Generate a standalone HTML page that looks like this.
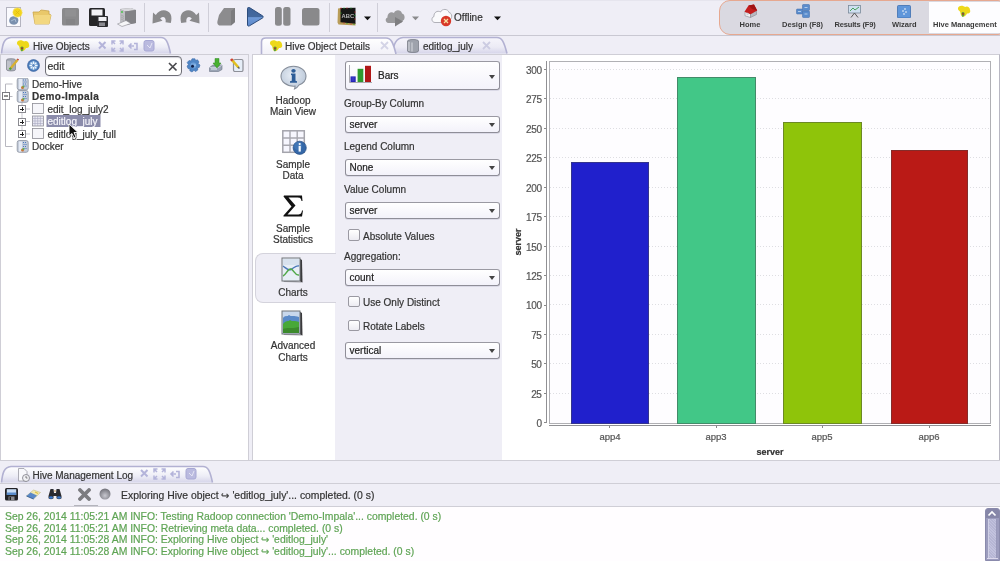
<!DOCTYPE html>
<html><head><meta charset="utf-8">
<style>
*{margin:0;padding:0;box-sizing:border-box}
html,body{width:1000px;height:561px;overflow:hidden;background:#EFEEF6;font-family:"Liberation Sans",sans-serif;color:#333;font-size:10px;position:relative}
.t,.combo,.lbl,.cbl,.tree,.log,.xl,.yt{-webkit-text-stroke:0.2px currentColor}
div,svg{position:absolute}
.t{white-space:nowrap;line-height:10px}
.sep{width:1px;background:#CFCED8;top:3px;height:29px}
.pl{font-weight:bold;font-size:7.5px;color:#3A3A3A;top:19.7px;line-height:10px;text-align:center;white-space:nowrap}
.combo{left:345px;width:155px;height:17.6px;margin-top:-0.2px;border:1px solid #8F8E98;border-top:1.5px solid #9A99A2;border-radius:3px;background:linear-gradient(#FFFFFF,#F3F2FA);font-size:10px;line-height:15px;padding-left:3.5px;color:#222;box-shadow:0 1px 0 #DAD9E6}
.combo:after{content:"";position:absolute;right:4px;top:50%;margin-top:-2px;border-left:3.5px solid transparent;border-right:3.5px solid transparent;border-top:4px solid #444}
.bars:after{margin-top:-0.5px}
.lbl{left:344px;color:#333;line-height:10px;white-space:nowrap}
.cb{left:348px;width:11.5px;height:11.5px;border:1.3px solid #9A99A2;border-radius:2px;background:linear-gradient(#FFF,#ECEBF2)}
.cbl{left:363px;color:#333;line-height:10px;white-space:nowrap}
.nav{width:80px;left:253px;text-align:center;line-height:11px;color:#333}
.yt{left:501px;width:40.6px;text-align:right;font-size:10px;line-height:10px;color:#555;margin-top:0.5px;letter-spacing:-0.35px}
.grid{left:550px;width:440px;height:1px;background:repeating-linear-gradient(90deg,#DEDEE2 0 1.5px,transparent 1.5px 3px)}
.xl{font-size:9.5px;color:#555;line-height:10px;width:40px;text-align:center}
.log{left:5px;font-size:10.4px;color:#5FA455;line-height:10px;white-space:nowrap}
.tree{color:#333;line-height:10px;white-space:nowrap}
#W{left:0;top:0;width:1000px;height:561px;will-change:transform}
</style></head><body><div id="W">

<!-- ================= TOOLBAR ================= -->
<div style="left:0;top:0;width:1000px;height:1px;background:#E6E5EE"></div>
<div style="left:0;top:35px;width:1000px;height:1px;background:#C9C8D2"></div>

<!-- 1 new -->
<svg style="left:6px;top:7px" width="17" height="20" viewBox="0 0 17 20">
 <rect x="0.5" y="0.5" width="14" height="19" fill="#FAFAFE" stroke="#B4B4C0"/>
 <path d="M3.5 12 C4.5 9 8 8.5 10 10 C12 10.5 13 12.5 12 15 C11.5 17 9 18 6.5 17.5 C4 17 2.5 14.5 3.5 12 Z" fill="#7A90AE"/>
 <path d="M5 14 L9 12 L10 15" stroke="#A8BCD4" stroke-width="1" fill="none"/>
 <circle cx="11.5" cy="5.5" r="4.6" fill="#F2D41C" stroke="#F6E060" stroke-width="1.2" stroke-dasharray="1 1"/>
 <path d="M9.5 3.5 L13.5 7.5 M13.5 3.5 L9.5 7.5" stroke="#E0B810" stroke-width="0.8"/>
</svg>
<!-- 2 folder -->
<svg style="left:32px;top:9px" width="20" height="16" viewBox="0 0 20 16">
 <path d="M1 3 L7 3 L9 1 L17 2 L17 5 L19 6 L17 15 L3 15 Z" fill="#E9C86A" stroke="#C9A44A" stroke-width="0.8"/>
 <path d="M2 6 L19 6 L17 15 L3 15 Z" fill="#F2D780"/>
</svg>
<!-- 3 gray floppy -->
<svg style="left:62px;top:8px" width="17" height="18" viewBox="0 0 17 18">
 <rect x="0" y="0" width="17" height="17.5" rx="1.5" fill="#8A8A8C"/>
 <rect x="3" y="1.5" width="11" height="7" fill="#909092"/>
 <rect x="4" y="11" width="9" height="6" fill="#848486"/>
</svg>
<!-- 4 black floppy -->
<svg style="left:89px;top:8px" width="19" height="19" viewBox="0 0 19 19">
 <rect x="0" y="0" width="16" height="18" rx="1.5" fill="#262628"/>
 <rect x="2.5" y="1.5" width="11" height="6" fill="#F2F2F6"/>
 <rect x="8" y="8" width="11" height="11" rx="1" fill="#2C2C30"/>
 <rect x="9.5" y="9" width="8" height="4" fill="#F0F0F4"/>
 <rect x="10" y="14.5" width="6" height="3.5" fill="#8A8A90"/>
</svg>
<!-- 5 printer -->
<svg style="left:117px;top:7px" width="20" height="20" viewBox="0 0 20 20">
 <path d="M3 2 L14 1 L19 3 L19 16 L8 18 L3 15 Z" fill="#8A8A8E"/>
 <path d="M3 2 L14 1 L19 3 L8 4.5 Z" fill="#D8D8DC"/>
 <path d="M3 2 L8 4.5 L8 18 L3 15 Z" fill="#BDBDC2"/>
 <path d="M8 4.5 L19 3 L19 16 L8 18 Z" fill="#828286"/>
 <circle cx="5" cy="5" r="0.9" fill="#40C040"/>
 <path d="M4 8 L7 9.5 M4 10 L7 11.5 M4 12 L7 13.5" stroke="#9A9AA0" stroke-width="0.6"/>
 <path d="M0.5 17 L9 13.5 L14 16.5 L5 19.5 Z" fill="#F6F6F8" stroke="#8A8A90" stroke-width="0.6"/>
</svg>
<div class="sep" style="left:144px"></div>
<!-- 6 undo -->
<svg style="left:152px;top:9px" width="20" height="15" viewBox="0 0 20 15">
 <path d="M0.5 14.5 L1 3.5 L3.8 6 C7 0.5 15 -0.5 18.5 5 C19.8 7.5 19.6 11 18.8 14 L13.5 13.2 C14.2 10.5 13 7.8 10.8 8 C9.8 8.1 8.8 8.8 8.2 9.5 L10.5 11.8 Z" fill="#8A8A8C"/>
</svg>
<!-- 7 redo -->
<svg style="left:180px;top:9px" width="20" height="15" viewBox="0 0 20 15">
 <g transform="translate(20,0) scale(-1,1)">
 <path d="M0.5 14.5 L1 3.5 L3.8 6 C7 0.5 15 -0.5 18.5 5 C19.8 7.5 19.6 11 18.8 14 L13.5 13.2 C14.2 10.5 13 7.8 10.8 8 C9.8 8.1 8.8 8.8 8.2 9.5 L10.5 11.8 Z" fill="#8A8A8C"/>
 </g>
</svg>
<div class="sep" style="left:208px"></div>
<!-- 8 gray box -->
<svg style="left:217px;top:7px" width="19" height="19" viewBox="0 0 19 19">
 <path d="M7 1 L18 1 L18 15 L14 18.5 L3 18.5 C0.5 18.5 0 16 0.5 14 L2 8 Z" fill="#8C8C8E"/>
 <path d="M14 4 L18 1 L18 15 L14 18.5 Z" fill="#7C7C7E"/>
</svg>
<!-- 9 play -->
<svg style="left:246px;top:7px" width="18" height="20" viewBox="0 0 18 20">
 <defs><linearGradient id="pg" x1="0" y1="0" x2="0" y2="1"><stop offset="0" stop-color="#3F649A"/><stop offset="0.5" stop-color="#44699E"/><stop offset="0.55" stop-color="#6F9AD8"/><stop offset="1" stop-color="#5A86C8"/></linearGradient></defs>
 <path d="M1.5 1.5 C1.5 0.5 2.5 0 3.5 0.6 L16.5 8.8 C17.5 9.4 17.5 10.4 16.5 11 L3.5 18.8 C2.5 19.4 1.5 19 1.5 18 Z" fill="url(#pg)" stroke="#2C4C7C" stroke-width="1"/>
</svg>
<!-- 10 pause -->
<svg style="left:275px;top:7px" width="16" height="19" viewBox="0 0 16 19">
 <rect x="0" y="0" width="6.8" height="18.8" rx="2.5" fill="#8A8A8C"/>
 <rect x="8.2" y="0" width="7.3" height="18.8" rx="2.5" fill="#8A8A8C"/>
</svg>
<!-- 11 stop -->
<svg style="left:302px;top:8px" width="18" height="18" viewBox="0 0 18 18">
 <rect x="0" y="0" width="17.5" height="17.6" rx="2.5" fill="#89898B"/>
</svg>
<div class="sep" style="left:329px"></div>
<!-- 12 abc board -->
<svg style="left:337px;top:7px" width="20" height="19" viewBox="0 0 20 19">
 <path d="M0.5 15.5 L1 1.5 L4 1 L4 14.5 L18.5 16 L18.5 18.5 L1.5 17.5 Z" fill="#B89C58"/>
 <path d="M3.5 1 L18.5 0.8 L18.5 16.8 L3.5 15.2 Z" fill="#161616"/>
 <text x="4.6" y="10.8" font-size="5.8" font-family="Liberation Sans" font-weight="bold" fill="#B8B8B8">ABC</text>
 <g fill="#D83030"><circle cx="4" cy="1.2" r="0.6"/><circle cx="10" cy="1" r="0.6"/><circle cx="18" cy="5" r="0.6"/><circle cx="18" cy="12" r="0.6"/><circle cx="7" cy="16" r="0.6"/><circle cx="14" cy="17" r="0.6"/></g>
 <g fill="#30B030"><circle cx="7" cy="1.1" r="0.6"/><circle cx="14" cy="1" r="0.6"/><circle cx="18" cy="8.5" r="0.6"/><circle cx="4" cy="6" r="0.6"/><circle cx="10" cy="16.5" r="0.6"/><circle cx="17" cy="17.3" r="0.6"/></g>
</svg>
<svg style="left:364px;top:16px" width="8" height="5" viewBox="0 0 8 5"><path d="M0 0.5 L7 0.5 L3.5 4.2 Z" fill="#111"/></svg>
<div class="sep" style="left:377px"></div>
<!-- 13 gray cloud -->
<svg style="left:385px;top:9px" width="20" height="18" viewBox="0 0 20 18">
 <path d="M3.5 14 C0.5 14 -0.5 9.5 2.5 8.5 C2 4.5 6 2 9 4 C10 0.5 16 0 17 4.5 C20 5 20.5 10 18 11.5 L16 14 Z" fill="#9A9A9C"/>
 <path d="M10 8 L18 12.5 L10 17.5 Z" fill="#7E7E80"/>
</svg>
<svg style="left:412px;top:16px" width="8" height="5" viewBox="0 0 8 5"><path d="M0 0.5 L7 0.5 L3.5 4.2 Z" fill="#8A8A8C"/></svg>
<!-- 14 offline -->
<svg style="left:431px;top:8px" width="22" height="19" viewBox="0 0 22 19">
 <path d="M4 14.5 C0.5 14.5 -0.2 9.5 3 8.5 C2.5 4.5 6.5 2 9.5 4 C11 0.5 17 0.5 18 4.5 C21.5 5 21.5 11 18.5 12 L16 14.5 Z" fill="#FAFAFC" stroke="#A8A8B0" stroke-width="0.9"/>
 <circle cx="15" cy="13" r="5.2" fill="#D83828"/>
 <path d="M13 11 L17 15 M17 11 L13 15" stroke="#F8E0A0" stroke-width="1.3"/>
</svg>
<div class="t" style="left:454px;top:12.5px;color:#333">Offline</div>
<svg style="left:494px;top:16px" width="8" height="5" viewBox="0 0 8 5"><path d="M0 0.5 L7 0.5 L3.5 4.2 Z" fill="#111"/></svg>

<!-- perspective switcher -->
<div style="left:719px;top:0;width:290px;height:35px;border:1.6px solid #E6A890;border-radius:11px;background:#DAD9E1"></div>
<div style="left:929px;top:2px;width:71px;height:31px;background:#FDFDFF"></div>
<svg style="left:744px;top:4px" width="14" height="14" viewBox="0 0 14 14">
 <path d="M1 7.5 L6.5 10 L6.5 13.5 L1 11.8 Z" fill="#F2F2F4" stroke="#8A8A90" stroke-width="0.6"/>
 <path d="M6.5 10 L12.5 6.5 L12.5 10.5 L6.5 13.5 Z" fill="#B8B8C0" stroke="#8A8A90" stroke-width="0.6"/>
 <path d="M0.5 7.8 L4.5 1.5 L10 0.5 L13.2 6.5 L6.5 10.2 Z" fill="#C41E1E"/>
 <path d="M4.5 1.5 L10 0.5 L13.2 6.5 L8 5 Z" fill="#A01414"/>
 <circle cx="3.5" cy="10" r="1.2" fill="#D0D0D8"/>
</svg>
<div class="pl" style="left:730px;width:40px">Home</div>
<svg style="left:796px;top:4px" width="14" height="14" viewBox="0 0 14 14">
 <rect x="0.5" y="5" width="6" height="5" rx="0.8" fill="#5A8CCC" stroke="#3A68A8" stroke-width="0.5"/>
 <rect x="6.5" y="0.5" width="7" height="6" rx="0.8" fill="#5A8CCC" stroke="#3A68A8" stroke-width="0.5"/>
 <rect x="6.5" y="7" width="7" height="6.5" rx="0.8" fill="#5A8CCC" stroke="#3A68A8" stroke-width="0.5"/>
 <path d="M2 7.5 L5 7.5 M8.5 3.5 L11.5 3.5 M8.5 10 L11.5 10" stroke="#C8DCF4" stroke-width="0.8"/>
</svg>
<div class="pl" style="left:782px;width:41px">Design (F8)</div>
<svg style="left:848px;top:5px" width="13" height="13" viewBox="0 0 13 13">
 <rect x="0.5" y="0.5" width="12" height="7.5" fill="#CFE0F0" stroke="#7A8A9A" stroke-width="0.8"/>
 <path d="M2 6 L5 3 L7 5 L11 2" stroke="#3A9A4A" stroke-width="0.9" fill="none"/>
 <path d="M6.5 8 L3 12.5 M6.5 8 L10 12.5" stroke="#555" stroke-width="1"/>
</svg>
<div class="pl" style="left:834px;width:42px;letter-spacing:-0.15px">Results (F9)</div>
<svg style="left:897px;top:5px" width="14" height="13" viewBox="0 0 14 13">
 <rect x="0.5" y="0.5" width="13" height="12.5" rx="1" fill="#5F96DA" stroke="#3E70B0" stroke-width="0.8"/>
 <circle cx="8" cy="4" r="0.8" fill="#fff"/><circle cx="6" cy="6" r="0.8" fill="#fff"/><circle cx="9" cy="7" r="0.8" fill="#fff"/><circle cx="7" cy="9" r="0.8" fill="#fff"/>
</svg>
<div class="pl" style="left:892px;width:24px">Wizard</div>
<svg style="left:957px;top:5px" width="14" height="13" viewBox="0 0 14 13">
 <path d="M2 1.5 C4 0 7 1 8 2 C10 0.5 13 2 13 5 C14 7 12 9 10 8.5 C9 11 6 13 4.5 11 C3 9 4 7 2.5 6 C0.5 5 0.5 2.5 2 1.5 Z" fill="#EDD81A"/>
 <path d="M4.5 8 C5 6.5 7 6.5 7.5 8 C8 10 6.5 12.5 5 11.5 Z" fill="#5AA040"/>
 <circle cx="6" cy="8.8" r="0.9" fill="#C02020"/>
</svg>
<div class="pl" style="left:933px;width:63px">Hive Management</div>

<!-- ================= TABS ================= -->
<svg style="left:0;top:36px" width="520" height="19" viewBox="0 0 520 19">
 <defs>
  <linearGradient id="tg" x1="0" y1="0" x2="0" y2="1"><stop offset="0" stop-color="#FFFFFF"/><stop offset="0.6" stop-color="#EDEDF6"/><stop offset="1" stop-color="#D6D5EA"/></linearGradient>
  <linearGradient id="tg2" x1="0" y1="0" x2="0" y2="1"><stop offset="0" stop-color="#FFFFFF"/><stop offset="1" stop-color="#F2F1F8"/></linearGradient>
  <linearGradient id="tg3" x1="0" y1="0" x2="0" y2="1"><stop offset="0" stop-color="#F6F5FB"/><stop offset="0.6" stop-color="#ECEBF5"/><stop offset="1" stop-color="#D6D5EA"/></linearGradient>
 </defs>
 <path d="M1.5 17.5 C2.5 8 4 2 11 1.5 L161 1.5 C166 1.5 168 6 170.5 17.5" fill="url(#tg)" stroke="#B2B1D2" stroke-width="1.6"/>
 <path d="M392 17.5 C394 8 396 2 403 1.5 L497 1.5 C502 1.5 504 6 507 17.5" fill="url(#tg3)" stroke="#B2B1D2" stroke-width="1.6"/>
 <path d="M261.5 18 L261.5 6 C261.5 3 263 2 266 2 L386 2 C391 2 393 6 396 18" fill="url(#tg2)" stroke="#B2B1D2" stroke-width="1.6"/>
</svg>
<!-- tab icons -->
<svg style="left:16px;top:39px" width="14" height="14" viewBox="0 0 14 13">
 <path d="M2 1.5 C4 0 7 1 8 2 C10 0.5 13 2 13 5 C14 7 12 9 10 8.5 C9 11 6 13 4.5 11 C3 9 4 7 2.5 6 C0.5 5 0.5 2.5 2 1.5 Z" fill="#EDD81A"/>
 <path d="M4.5 8 C5 6.5 7 6.5 7.5 8 C8 10 6.5 12.5 5 11.5 Z" fill="#5AA040"/>
 <circle cx="6" cy="8.8" r="0.9" fill="#C02020"/>
</svg>
<div class="t" style="left:33px;top:42px;color:#333;font-size:10px">Hive Objects</div>
<svg style="left:97px;top:40px" width="60" height="13" viewBox="0 0 60 13">
 <g stroke="#B4B4DA" fill="none">
 <path d="M2 2 L8.5 8.5 M8.5 2 L2 8.5" stroke-width="2"/>
 <path d="M15 4.5 L15 1 L18.5 1 M22.5 1 L26 1 L26 4.5 M15 7.5 L15 11 L18.5 11 M22.5 11 L26 11 L26 7.5 M15 1 L18 4 M26 1 L23 4 M15 11 L18 8 M26 11 L23 8" stroke-width="1.5"/>
 <path d="M32 6 L37 6 M34.5 3.5 L32 6 L34.5 8.5" stroke-width="1.6"/>
 <path d="M37 3.5 L40 3.5 L40 9.5 L37 9.5" stroke-width="1.6"/>
 </g>
 <rect x="47" y="0.5" width="10" height="10.5" rx="2" fill="#BABADF" stroke="#A8A8D4"/>
 <path d="M50 5 L53 8 L55 3" stroke="#E4E4F4" stroke-width="1" fill="none"/>
</svg>
<svg style="left:269px;top:39px" width="14" height="14" viewBox="0 0 14 13">
 <path d="M2 1.5 C4 0 7 1 8 2 C10 0.5 13 2 13 5 C14 7 12 9 10 8.5 C9 11 6 13 4.5 11 C3 9 4 7 2.5 6 C0.5 5 0.5 2.5 2 1.5 Z" fill="#EDD81A"/>
 <path d="M4.5 8 C5 6.5 7 6.5 7.5 8 C8 10 6.5 12.5 5 11.5 Z" fill="#5AA040"/>
 <circle cx="6" cy="8.8" r="0.9" fill="#C02020"/>
</svg>
<div class="t" style="left:285px;top:42px;color:#333">Hive Object Details</div>
<svg style="left:380px;top:41px" width="9" height="9" viewBox="0 0 9 9"><path d="M1 1 L8 8 M8 1 L1 8" stroke="#D4D4E6" stroke-width="1.8"/></svg>
<svg style="left:407px;top:39px" width="12" height="14" viewBox="0 0 12 14">
 <path d="M0.5 2 C0.5 0 11.5 0 11.5 2 L11.5 12 C11.5 14 0.5 14 0.5 12 Z" fill="#9EA2AC" stroke="#70747E" stroke-width="0.7"/>
 <path d="M2 3 L2 12 M5 3.5 L5 12.5" stroke="#D8DAE0" stroke-width="1"/>
</svg>
<div class="t" style="left:423px;top:42px;color:#333">editlog_july</div>
<svg style="left:482px;top:41px" width="9" height="9" viewBox="0 0 9 9"><path d="M1 1 L8 8 M8 1 L1 8" stroke="#CCCCE2" stroke-width="1.8"/></svg>

<!-- ================= LEFT PANEL ================= -->
<div style="left:0;top:54px;width:249px;height:407px;border:1px solid #CFCED6;background:#EFEEF6"></div>
<div style="left:1px;top:77px;width:247px;height:383px;background:#FFFFFF"></div>
<!-- search row icons -->
<svg style="left:6px;top:58px" width="13" height="14" viewBox="0 0 13 14">
 <path d="M0.5 2 C0.5 0.2 9.5 0.2 9.5 2 L9.5 11.5 C9.5 13.5 0.5 13.5 0.5 11.5 Z" fill="#A8ACB6" stroke="#70747E" stroke-width="0.6"/>
 <path d="M2 3 L2 11.5 M4 3.3 L4 12" stroke="#DCDEE4" stroke-width="0.9"/>
 <path d="M4 11 L11.5 2" stroke="#D8B030" stroke-width="2.2"/>
 <path d="M11.5 2 L12.3 1" stroke="#C04030" stroke-width="2"/>
 <path d="M3.5 11.5 L5 9.8" stroke="#48A040" stroke-width="2"/>
</svg>
<svg style="left:27px;top:59px" width="13" height="13" viewBox="0 0 13 13">
 <circle cx="6.5" cy="6.5" r="6" fill="#4A7AB8" stroke="#3A62A0" stroke-width="0.6"/>
 <circle cx="6.5" cy="6.5" r="4.2" fill="#8AB4E0"/>
 <path d="M6.5 2.5 L6.5 10.5 M2.5 6.5 L10.5 6.5 M3.7 3.7 L9.3 9.3 M9.3 3.7 L3.7 9.3" stroke="#F0F6FC" stroke-width="1.1"/>
 <circle cx="6.5" cy="6.5" r="1.4" fill="#5A88C0"/>
</svg>
<div style="left:45px;top:56px;width:137px;height:20px;border:1px solid #6E6E76;border-radius:4px;background:#FFFFFF;box-shadow:inset 0 1px 1px #D0D0D8"></div>
<div class="t" style="left:47.5px;top:61px;font-size:10.5px;color:#333">edit</div>
<svg style="left:167.5px;top:61.5px" width="10" height="10" viewBox="0 0 10 10"><path d="M1 1 L8.5 8.5 M8.5 1 L1 8.5" stroke="#4A4A4E" stroke-width="1.7"/></svg>
<svg style="left:186px;top:58px" width="15" height="15" viewBox="0 0 15 15">
 <path d="M6 0.8 L9 0.8 L9.5 2.5 L11.5 1.8 L13 4 L12 5.5 L14 7 L13.2 9.5 L11.5 9.8 L11.8 12 L9.5 13.5 L8 12.3 L6 14 L3.8 12.8 L4 11 L2 10.5 L1 8 L2.5 6.8 L1.2 4.5 L3 2.5 L5 3 Z" fill="#4F86C6" stroke="#3A6AA8" stroke-width="0.6"/>
 <circle cx="7.3" cy="7.5" r="3" fill="#6FA2DA"/>
 <circle cx="6.5" cy="8.2" r="1.5" fill="#10204A"/>
 <circle cx="9" cy="7" r="0.6" fill="#E0F0FF"/>
</svg>
<svg style="left:209px;top:58px" width="14" height="14" viewBox="0 0 14 14">
 <path d="M0.5 9.5 L4 7 L13 7 L13 11.5 L9.5 13.5 L0.5 13.5 Z" fill="#9AA4B4" stroke="#6A7484" stroke-width="0.6"/>
 <path d="M0.5 9.5 L9.5 9.5 L13 7" stroke="#D4DAE4" stroke-width="0.8" fill="none"/>
 <path d="M2 11 L8 11" stroke="#E8EEF6" stroke-width="1"/>
 <path d="M6 0.5 L10 0.5 L10 5 L12 5 L8 10 L4 5 L6 5 Z" fill="#48B030" stroke="#2E8A20" stroke-width="0.5"/>
</svg>
<svg style="left:230px;top:58px" width="14" height="14" viewBox="0 0 14 14">
 <rect x="3.5" y="1.5" width="9.5" height="12" rx="1.5" fill="#E6EEF8" stroke="#8E9098" stroke-width="1.2"/>
 <path d="M1.5 1.5 L8.5 9.5" stroke="#E2C020" stroke-width="2.6"/>
 <path d="M1 1 L2.5 2.7" stroke="#D04030" stroke-width="2.6"/>
 <path d="M8 9 L9.5 10.5" stroke="#606060" stroke-width="1.5"/>
</svg>

<!-- tree -->
<svg style="left:0;top:78px" width="130" height="75" viewBox="0 0 130 75">
 <path d="M5.5 6 L5.5 68.5 L12.5 68.5 M5.5 6 L12.5 6 M9.5 18.5 L12.5 18.5" stroke="#B8B8C0" stroke-width="1" fill="none"/>
 <path d="M22 23 L22 56 M26 31 L30 31 M26 43.5 L30 43.5 M26 56 L30 56" stroke="#C8C8D0" stroke-width="1" fill="none"/>
 <rect x="2.5" y="14.5" width="7" height="7" fill="#FFF" stroke="#7A7A80" stroke-width="1"/>
 <path d="M4 18 L8 18" stroke="#222" stroke-width="1"/>
 <g fill="#FFF" stroke="#8A8A90" stroke-width="1">
  <rect x="18.5" y="27.5" width="7" height="7"/><rect x="18.5" y="40.5" width="7" height="7"/><rect x="18.5" y="52.5" width="7" height="7"/>
 </g>
 <path d="M20 31 L24 31 M22 29 L22 33 M20 44 L24 44 M22 42 L22 46 M20 56 L24 56 M22 54 L22 58" stroke="#222" stroke-width="1" shape-rendering="crispEdges"/>
 <!-- db icons -->
 <g id="db">
  <rect x="17.2" y="0" width="11" height="11.8" rx="2" fill="#C4CCDA" stroke="#8C92A0" stroke-width="0.8"/>
  <rect x="19" y="1" width="3" height="10" fill="#E4EAF4"/>
  <path d="M23 2 L27 2 M23.5 4 L27 4 M23 6 L27 6 M23.5 8 L26.5 8" stroke="#4A7AC0" stroke-width="1" stroke-dasharray="1 1"/>
  <circle cx="22.5" cy="9.5" r="1.5" fill="#C87838"/>
  <circle cx="23.5" cy="8.5" r="1" fill="#60B050"/>
 </g>
 <use href="#db" y="12.5"/>
 <use href="#db" y="62.5"/>
 <!-- table icons -->
 <g fill="#F6F6FA" stroke="#8E8E96" stroke-width="0.8">
  <rect x="32.5" y="25.5" width="11" height="10"/>
  <rect x="32.5" y="38" width="11" height="10" fill="#E8E8F2"/>
  <rect x="32.5" y="50.5" width="11" height="10"/>
 </g>
 <path d="M35 38 L35 48 M37.7 38 L37.7 48 M40.4 38 L40.4 48 M32.5 40.5 L43.5 40.5 M32.5 43 L43.5 43 M32.5 45.5 L43.5 45.5" stroke="#A8A8C0" stroke-width="0.6"/>
 <rect x="46.5" y="37" width="54" height="12" fill="#8B8CAB"/>
</svg>
<div class="tree" style="left:32px;top:79.5px">Demo-Hive</div>
<div class="tree" style="left:32px;top:92px;font-weight:bold;letter-spacing:0.4px">Demo-Impala</div>
<div class="tree" style="left:47.5px;top:104.5px">edit_log_july2</div>
<div class="tree" style="left:47.5px;top:117px;color:#F4F4FA">editlog_july</div>
<div class="tree" style="left:47.5px;top:129.5px">editlog_july_full</div>
<div class="tree" style="left:32px;top:142px">Docker</div>
<!-- cursor -->
<svg style="left:68px;top:123px" width="11" height="16" viewBox="0 0 11 16">
 <path d="M1 1 L1 13 L4 10.5 L6 15 L8 14 L6 9.5 L10 9.5 Z" fill="#111" stroke="#FFF" stroke-width="0.9"/>
</svg>

<!-- ================= RIGHT PANEL ================= -->
<div style="left:252px;top:54px;width:748px;height:407px;border:1px solid #CFCED6;border-right:1px solid #B8B7C2;background:#FFFFFF"></div>
<div style="left:335px;top:55px;width:167px;height:405px;background:#EFEEF6"></div>
<!-- selected nav tab -->
<div style="left:255px;top:253px;width:81px;height:50px;background:#EFEEF6;border:1px solid #D4D3DC;border-right:none;border-radius:8px 0 0 8px"></div>

<!-- nav icons -->
<svg style="left:280px;top:65px" width="27" height="25" viewBox="0 0 27 25">
 <defs><radialGradient id="bub" cx="0.45" cy="0.4" r="0.7"><stop offset="0" stop-color="#E8EEF6"/><stop offset="1" stop-color="#B4C2D4"/></radialGradient></defs>
 <path d="M13.5 1.2 C20.5 1.2 26 5.5 26 11.2 C26 15.5 23 18.5 19 20 C18 21.5 16.5 23.5 14.5 24 C15 22.5 15.2 21.5 15 21 C14.5 21.1 14 21.2 13.5 21.2 C6.5 21.2 1 16.8 1 11.2 C1 5.5 6.5 1.2 13.5 1.2 Z" fill="url(#bub)" stroke="#868E9A" stroke-width="1.1"/>
 <ellipse cx="13.5" cy="5.8" rx="2.2" ry="1.9" fill="#2E5E98"/>
 <path d="M11 8.5 L15.5 8.5 L15.5 15.8 L17 16.3 L17 17.8 L10 17.8 L10 16.3 L11.8 15.8 L11.8 10.2 L11 10 Z" fill="#2E5E98"/>
</svg>
<div class="nav t" style="top:95px">Hadoop</div>
<div class="nav t" style="top:106px">Main View</div>

<svg style="left:282px;top:130px" width="25" height="25" viewBox="0 0 25 25">
 <rect x="0.8" y="0.8" width="21.5" height="21.5" fill="#F6F6FE" stroke="#A4A4AC" stroke-width="1.5"/>
 <path d="M8 0.8 L8 22.3 M15.2 0.8 L15.2 22.3 M0.8 8 L22.3 8 M0.8 15.2 L22.3 15.2" stroke="#A8A8B0" stroke-width="1.4"/>
 <circle cx="17.7" cy="17.8" r="6.6" fill="#3568A8" stroke="#244C84" stroke-width="0.7"/>
 <circle cx="16.2" cy="16" r="4" fill="#4A80C0" opacity="0.6"/>
 <circle cx="17.7" cy="14" r="1.1" fill="#FFF"/>
 <rect x="16.6" y="15.8" width="2.2" height="5.8" fill="#F4F8FC"/>
</svg>
<div class="nav t" style="top:159px">Sample</div>
<div class="nav t" style="top:170px">Data</div>

<svg style="left:283px;top:195px" width="21" height="22" viewBox="0 0 21 22">
 <path d="M1 0.5 L19 0.5 L19.5 6 L18.5 6 C18 3 17 2.5 14 2.5 L5.5 2.5 L12.5 10.5 L4.5 19.5 L14.5 19.5 C17.5 19.5 18.5 18.5 19 15.5 L20 15.5 L19 21.5 L0.5 21.5 L0.5 20.5 L8.5 11.5 L0.5 1.5 Z" fill="#111"/>
</svg>
<div class="nav t" style="top:223px">Sample</div>
<div class="nav t" style="top:234px">Statistics</div>

<svg style="left:281px;top:257px" width="23" height="27" viewBox="0 0 23 27">
 <path d="M18.5 1.5 L21 3 L21.5 25.5 L19 24.5 Z" fill="#3A3A3C"/>
 <path d="M1.5 22.5 L19 24.5 L21.5 25.5 L3 25 Z" fill="#9A9AA0"/>
 <rect x="1" y="1" width="18" height="23" fill="#E8EEF6" stroke="#707478" stroke-width="1"/>
 <rect x="2" y="2" width="16" height="6" fill="#D8E2EE"/>
 <path d="M2 9 C5 11 7 14 10 12.5 C13 11 15 8 18 9" stroke="#4A78B8" stroke-width="1.4" fill="none"/>
 <path d="M2 19 C5 18 7 11 10 12 C13 13 14 19 18 18" stroke="#50A848" stroke-width="1.5" fill="none"/>
</svg>
<div class="nav t" style="top:287px">Charts</div>

<svg style="left:281px;top:310px" width="23" height="27" viewBox="0 0 23 27">
 <path d="M18.5 1.5 L21 3 L21.5 25.5 L19 24.5 Z" fill="#3A3A3C"/>
 <path d="M1.5 22.5 L19 24.5 L21.5 25.5 L3 25 Z" fill="#9A9AA0"/>
 <rect x="1" y="1" width="18" height="23" fill="#C8D8EC" stroke="#707478" stroke-width="1"/>
 <path d="M2 8 C4 5 6 7 8 5 C10 7 13 5 18 7 L18 23 L2 23 Z" fill="#5A8AC8"/>
 <path d="M2 14 C5 10 7 12 9 10 C11 12 14 10 18 12 L18 23 L2 23 Z" fill="#48A838"/>
 <path d="M2 19 C6 17 10 19 18 17 L18 23 L2 23 Z" fill="#3C8A2C"/>
</svg>
<div class="nav t" style="top:340px">Advanced</div>
<div class="nav t" style="top:352px">Charts</div>

<!-- options -->
<div class="combo bars" style="top:61px;height:29px;line-height:27px;padding-left:32px;font-size:10px">Bars</div>
<svg style="left:349px;top:65px" width="24" height="19" viewBox="0 0 24 19">
 <path d="M0.5 0 L0.5 17.5 L23 17.5" stroke="#A0A0A8" stroke-width="0.9" fill="none"/>
 <rect x="1.5" y="11.4" width="5.2" height="5.6" fill="#2424B8"/>
 <rect x="8.6" y="3.8" width="5.7" height="13.2" fill="#2E9A2E"/>
 <rect x="16" y="0.8" width="6" height="16.2" fill="#B01818"/>
 <path d="M2.5 13 L5.5 13 M2.5 15 L5.5 15" stroke="#6A6AE0" stroke-width="0.6"/>
</svg>
<div class="lbl t" style="top:99px">Group-By Column</div>
<div class="combo" style="top:116px">server</div>
<div class="lbl t" style="top:142px">Legend Column</div>
<div class="combo" style="top:159px">None</div>
<div class="lbl t" style="top:185px">Value Column</div>
<div class="combo" style="top:202px">server</div>
<div class="cb" style="top:229.3px"></div><div class="cbl t" style="top:232px">Absolute Values</div>
<div class="lbl t" style="top:252px">Aggregation:</div>
<div class="combo" style="top:269px">count</div>
<div class="cb" style="top:295.5px"></div><div class="cbl t" style="top:298px">Use Only Distinct</div>
<div class="cb" style="top:319.5px"></div><div class="cbl t" style="top:322px">Rotate Labels</div>
<div class="combo" style="top:342px">vertical</div>

<!-- ================= CHART ================= -->
<div style="left:549px;top:61px;width:442px;height:363px;border:1px solid #B0B0B4;background:#FEFDFF"></div>
<div class="grid" style="top:69px"></div>
<div class="grid" style="top:98px"></div>
<div class="grid" style="top:128px"></div>
<div class="grid" style="top:157px"></div>
<div class="grid" style="top:187px"></div>
<div class="grid" style="top:216px"></div>
<div class="grid" style="top:246px"></div>
<div class="grid" style="top:275px"></div>
<div class="grid" style="top:304px"></div>
<div class="grid" style="top:334px"></div>
<div class="grid" style="top:363px"></div>
<div class="grid" style="top:393px"></div>
<div style="left:546px;top:61px;width:1px;height:362px;background:#909094"></div>
<div style="left:549px;top:425px;width:442px;height:1px;background:#909094"></div>
<!-- y ticks -->
<div style="left:544px;top:69px;width:2px;height:355px;background:repeating-linear-gradient(#888 0 1px,transparent 1px 29.44px)"></div>
<div class="yt" style="top:65px">300</div>
<div class="yt" style="top:94px">275</div>
<div class="yt" style="top:124px">250</div>
<div class="yt" style="top:153px">225</div>
<div class="yt" style="top:183px">200</div>
<div class="yt" style="top:212px">175</div>
<div class="yt" style="top:242px">150</div>
<div class="yt" style="top:271px">125</div>
<div class="yt" style="top:300px">100</div>
<div class="yt" style="top:330px">75</div>
<div class="yt" style="top:359px">50</div>
<div class="yt" style="top:389px">25</div>
<div class="yt" style="top:418px">0</div>
<div class="t" style="left:503px;top:237px;width:30px;text-align:center;font-weight:bold;font-size:9px;color:#333;transform:rotate(-90deg)">server</div>
<!-- bars -->
<div style="left:571px;top:162px;width:77.5px;height:262px;background:#2020CC;border:1px solid rgba(70,70,90,0.55)"></div>
<div style="left:677px;top:77px;width:78.5px;height:347px;background:#42C787;border:1px solid rgba(70,90,80,0.55)"></div>
<div style="left:783px;top:122px;width:79px;height:302px;background:#8FC40A;border:1px solid rgba(80,90,60,0.55)"></div>
<div style="left:891px;top:150px;width:77px;height:274px;background:#BA1A16;border:1px solid rgba(90,60,60,0.55)"></div>
<!-- x ticks and labels -->
<div style="left:609px;top:426px;width:1px;height:2px;background:#888"></div>
<div style="left:716px;top:426px;width:1px;height:2px;background:#888"></div>
<div style="left:822px;top:426px;width:1px;height:2px;background:#888"></div>
<div style="left:929px;top:426px;width:1px;height:2px;background:#888"></div>
<div class="xl" style="left:590px;top:432px">app4</div>
<div class="xl" style="left:696px;top:432px">app3</div>
<div class="xl" style="left:802px;top:432px">app5</div>
<div class="xl" style="left:909px;top:432px">app6</div>
<div class="t" style="left:740px;top:447px;width:60px;text-align:center;font-weight:bold;font-size:9px;color:#333">server</div>

<!-- ================= BOTTOM LOG ================= -->
<div style="left:0;top:460px;width:1000px;height:1px;background:#CFCED6"></div>
<svg style="left:0;top:465px" width="220" height="19" viewBox="0 0 220 19">
 <path d="M1.5 17.5 C2.5 8 4 2 11 1.5 L203 1.5 C208 1.5 210 6 212.5 17.5" fill="url(#tg)" stroke="#B2B1D2" stroke-width="1.6"/>
</svg>
<svg style="left:18px;top:468px" width="12" height="14" viewBox="0 0 12 14">
 <path d="M0.5 0.5 L6 0.5 L9 3.5 L9 13 L0.5 13 Z" fill="#F8F8FC" stroke="#9A9AA4" stroke-width="0.8"/>
 <circle cx="8" cy="10" r="3.5" fill="#F0F0F4" stroke="#7A7A84" stroke-width="0.8"/>
 <path d="M8 8 L8 10 L9.5 10" stroke="#555" stroke-width="0.7" fill="none"/>
</svg>
<div class="t" style="left:32.5px;top:471px;color:#333">Hive Management Log</div>
<svg style="left:139px;top:468px" width="60" height="13" viewBox="0 0 60 13">
 <g stroke="#B4B4DA" fill="none">
 <path d="M2 2 L8.5 8.5 M8.5 2 L2 8.5" stroke-width="2"/>
 <path d="M15 4.5 L15 1 L18.5 1 M22.5 1 L26 1 L26 4.5 M15 7.5 L15 11 L18.5 11 M22.5 11 L26 11 L26 7.5 M15 1 L18 4 M26 1 L23 4 M15 11 L18 8 M26 11 L23 8" stroke-width="1.5"/>
 <path d="M32 6 L37 6 M34.5 3.5 L32 6 L34.5 8.5" stroke-width="1.6"/>
 <path d="M37 3.5 L40 3.5 L40 9.5 L37 9.5" stroke-width="1.6"/>
 </g>
 <rect x="47" y="0.5" width="10" height="10.5" rx="2" fill="#BABADF" stroke="#A8A8D4"/>
 <path d="M50 5 L53 8 L55 3" stroke="#E4E4F4" stroke-width="1" fill="none"/>
</svg>
<div style="left:0;top:483px;width:1000px;height:1px;background:#CFCED6"></div>
<svg style="left:5px;top:488px" width="14" height="13" viewBox="0 0 14 13">
 <rect x="0" y="0" width="13" height="12.5" rx="1.5" fill="#222226"/>
 <rect x="1.8" y="1.2" width="9.4" height="5.8" fill="#C8DCF4"/>
 <rect x="1.8" y="4.5" width="9.4" height="2.5" fill="#5A8CCC"/>
 <rect x="3.5" y="8.5" width="6" height="4" fill="#8A8A90"/>
 <rect x="4.5" y="9" width="1.5" height="3" fill="#222"/>
</svg>
<svg style="left:26px;top:489px" width="15" height="11" viewBox="0 0 15 11">
 <path d="M0.5 7 L7.5 1 L14.5 3.5 L7.5 10 Z" fill="#F0E8B0" stroke="#B8B070" stroke-width="0.5"/>
 <path d="M0.5 7 L4.5 3.5 L11 6.5 L7.5 10 Z" fill="#5A88C8"/>
 <path d="M0.5 7 L7.5 10" stroke="#2A5898" stroke-width="0.8"/>
 <path d="M9 3 L12 4.5" stroke="#E0C040" stroke-width="1.2"/>
</svg>
<svg style="left:48px;top:488px" width="14" height="12" viewBox="0 0 14 12">
 <path d="M2.5 1 L5.5 1 L6 5 L8 5 L8.5 1 L11.5 1 L13.5 8 L13.5 10 C13.5 11.5 8.5 11.5 8.5 10 L8.5 8 L5.5 8 L5.5 10 C5.5 11.5 0.5 11.5 0.5 10 L0.5 8 Z" fill="#2A2A30"/>
 <ellipse cx="3" cy="9.5" rx="2" ry="1.2" fill="#3A7AD0"/>
 <ellipse cx="11" cy="9.5" rx="2" ry="1.2" fill="#3A7AD0"/>
 <path d="M6 3 L8 3" stroke="#C08030" stroke-width="0.8"/>
</svg>
<svg style="left:78px;top:488px" width="13" height="13" viewBox="0 0 13 13"><path d="M2 2 L11 11 M11 2 L2 11" stroke="#7C7C80" stroke-width="3.8" stroke-linecap="round"/></svg>
<svg style="left:99px;top:488px" width="12" height="12" viewBox="0 0 12 12">
 <defs><radialGradient id="sph" cx="0.5" cy="0.65" r="0.6"><stop offset="0" stop-color="#C8C8D0"/><stop offset="1" stop-color="#76767E"/></radialGradient></defs>
 <circle cx="6" cy="6" r="5.5" fill="url(#sph)"/>
</svg>
<div class="t" style="left:121px;top:491px;color:#333;font-size:10.4px">Exploring Hive object ↪ 'editlog_july'... completed. (0 s)</div>
<div style="left:74px;top:505px;width:24px;height:1px;background:#B4B4BC"></div>
<div style="left:0;top:506px;width:1000px;height:55px;background:#FFFDFF;border-top:1px solid #CFCED6"></div>
<div class="log" style="top:512px">Sep 26, 2014 11:05:21 AM INFO: Testing Radoop connection 'Demo-Impala'... completed. (0 s)</div>
<div class="log" style="top:523.5px">Sep 26, 2014 11:05:21 AM INFO: Retrieving meta data... completed. (0 s)</div>
<div class="log" style="top:535px">Sep 26, 2014 11:05:28 AM INFO: Exploring Hive object ↪ 'editlog_july'</div>
<div class="log" style="top:546.5px">Sep 26, 2014 11:05:28 AM INFO: Exploring Hive object ↪ 'editlog_july'... completed. (0 s)</div>
<!-- scrollbar -->
<div style="left:985px;top:508px;width:14.5px;height:53px;border-radius:3px 3px 0 0;background:#9C9CBE;border:1px solid #8A8AAC"></div>
<div style="left:986px;top:509px;width:12.5px;height:9px;border-radius:2px 2px 0 0;background:#8686A8"></div>
<div style="left:987.5px;top:519px;width:9.5px;height:39px;background:repeating-linear-gradient(45deg,#B6B6D4 0 1px,#C2C2DE 1px 2px);border-left:1px solid #D0D0E6;border-right:1px solid #9898BA"></div>
<div style="left:987px;top:557.5px;width:11px;height:1px;background:#DCD8EC"></div>
<svg style="left:987px;top:510px" width="10" height="7" viewBox="0 0 10 7"><path d="M1.5 5.5 L5 2 L8.5 5.5" stroke="#FFF" stroke-width="1.7" fill="none"/></svg>
</div></body></html>
